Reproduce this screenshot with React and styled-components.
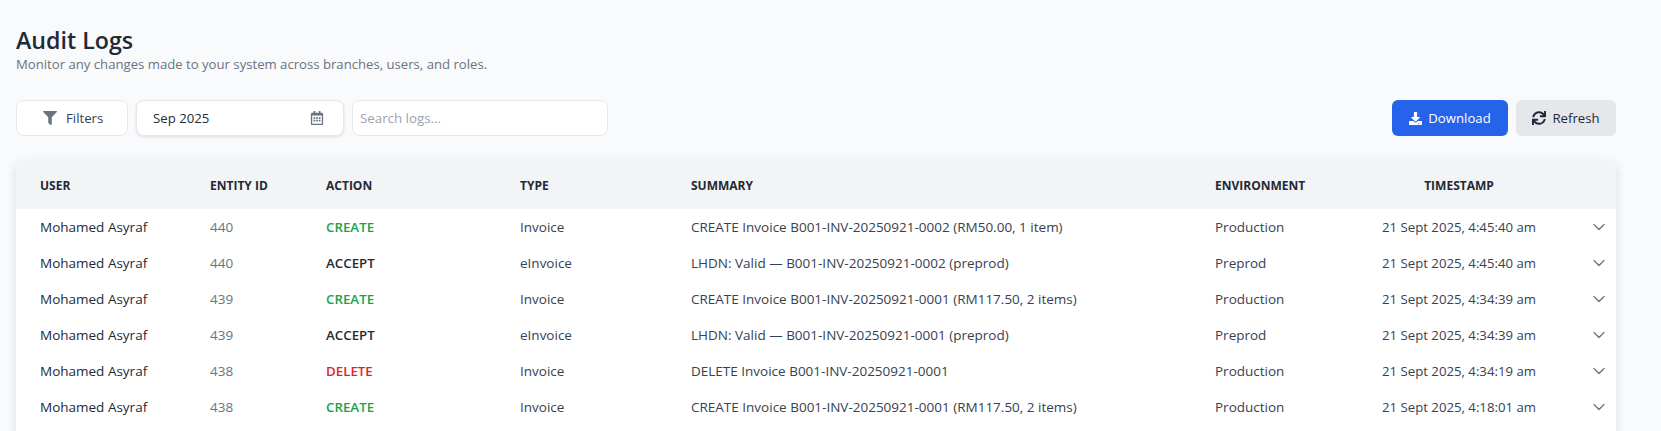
import React from "react";
import styled, { createGlobalStyle } from "styled-components";
import { FaFilter, FaDownload, FaSync, FaRegCalendarAlt } from "react-icons/fa";
import { ChevronDown } from "lucide-react";

const logs = [
  { id: 440, action: "CREATE", type: "Invoice", summary: "CREATE Invoice B001-INV-20250921-0002 (RM50.00, 1 item)", env: "Production", time: "21 Sept 2025, 4:45:40 am" },
  { id: 440, action: "ACCEPT", type: "eInvoice", summary: "LHDN: Valid — B001-INV-20250921-0002 (preprod)", env: "Preprod", time: "21 Sept 2025, 4:45:40 am" },
  { id: 439, action: "CREATE", type: "Invoice", summary: "CREATE Invoice B001-INV-20250921-0001 (RM117.50, 2 items)", env: "Production", time: "21 Sept 2025, 4:34:39 am" },
  { id: 439, action: "ACCEPT", type: "eInvoice", summary: "LHDN: Valid — B001-INV-20250921-0001 (preprod)", env: "Preprod", time: "21 Sept 2025, 4:34:39 am" },
  { id: 438, action: "DELETE", type: "Invoice", summary: "DELETE Invoice B001-INV-20250921-0001", env: "Production", time: "21 Sept 2025, 4:34:19 am" },
  { id: 438, action: "CREATE", type: "Invoice", summary: "CREATE Invoice B001-INV-20250921-0001 (RM117.50, 2 items)", env: "Production", time: "21 Sept 2025, 4:18:01 am" },
];

const actionColors = { CREATE: "#16a34a", ACCEPT: "#1f2937", DELETE: "#dc2626" };

const GlobalStyle = createGlobalStyle`
  html, body {
    margin: 0;
    background: #f9fafb;
    overflow: hidden;
  }
  body {
    font-family: "Open Sans", "Noto Sans", sans-serif;
  }
`;

const Page = styled.div`
  height: 100vh;
  box-sizing: border-box;
  padding: 24px 45px 0 16px;
  display: flex;
  flex-direction: column;
  overflow: hidden;
`;

const Title = styled.h1`
  margin: 0;
  font-size: 23.2px;
  line-height: 32px;
  font-weight: 600;
  color: #1f2937;
`;

const Subtitle = styled.p`
  margin: 0;
  font-size: 13.15px;
  line-height: 16px;
  color: #6b7280;
`;

const Toolbar = styled.div`
  margin-top: 28px;
  display: flex;
  justify-content: space-between;
`;

const ToolGroup = styled.div`
  display: flex;
  gap: 8px;
`;

const FilterButton = styled.button`
  width: 112px;
  height: 36px;
  padding: 0 0 0 26px;
  display: flex;
  align-items: center;
  gap: 9px;
  background: #fff;
  border: 1px solid #e5e7eb;
  border-radius: 8px;
  font: inherit;
  font-size: 13.2px;
  color: #374151;
  svg { color: #6b7280; }
`;

const DateField = styled.div`
  width: 208px;
  height: 36px;
  box-sizing: border-box;
  padding: 0 19px 0 16px;
  display: flex;
  align-items: center;
  justify-content: space-between;
  background: #fff;
  border: 1px solid #e5e7eb;
  border-radius: 8px;
  box-shadow: 0 1px 3px rgba(0, 0, 0, 0.12);
  font-size: 13.2px;
  color: #1f2937;
  svg { color: #6b7280; }
`;

const SearchInput = styled.input`
  width: 256px;
  height: 36px;
  box-sizing: border-box;
  padding: 0 7px;
  background: #fff;
  border: 1px solid #e5e7eb;
  border-radius: 8px;
  font: inherit;
  font-size: 13.3px;
  &::placeholder { color: #9ca3af; }
`;

const ActionButton = styled.button`
  height: 36px;
  width: ${(p) => p.$width}px;
  padding: 0;
  display: flex;
  align-items: center;
  justify-content: center;
  gap: 6px;
  border: none;
  border-radius: 6px;
  font: inherit;
  font-size: 13.2px;
  background: ${(p) => (p.$primary ? "#2563eb" : "#e5e7eb")};
  color: ${(p) => (p.$primary ? "#fff" : "#1f2937")};
`;

const Card = styled.div`
  margin-top: 24px;
  flex: 1;
  background: #fff;
  border-radius: 8px 8px 0 0;
  box-shadow: 0 4px 12px rgba(0, 0, 0, 0.12);
  overflow: hidden;
`;

const Table = styled.table`
  width: 100%;
  table-layout: fixed;
  border-collapse: collapse;
`;

const HeadRow = styled.tr`
  height: 49px;
  background: #f3f4f6;
`;

const HeadCell = styled.th`
  padding: 2px 0 0 ${(p) => (p.$center ? 0 : 24)}px;
  text-align: ${(p) => (p.$center ? "center" : "left")};
  font-size: 12px;
  font-weight: 700;
  color: #1f2937;
`;

const Row = styled.tr`
  height: 36px;
`;

const Cell = styled.td`
  padding: 0 0 0 24px;
  font-size: 13.5px;
  color: #374151;
  white-space: nowrap;
`;

const UserCell = styled(Cell)`
  color: #1f2937;
`;

const IdCell = styled(Cell)`
  color: #6b7280;
`;

const ActionCell = styled(Cell)`
  font-size: 13.3px;
  font-weight: 600;
  color: ${(p) => p.$color};
`;

const TimeCell = styled(Cell)`
  padding: 0;
  text-align: center;
  font-size: 13.2px;
`;

const ChevronCell = styled.td`
  padding: 0;
  color: #6b7280;
  svg { display: block; margin-left: 22px; }
`;

const App = () => (
  <>
    <GlobalStyle />
    <Page>
      <Title>Audit Logs</Title>
      <Subtitle>Monitor any changes made to your system across branches, users, and roles.</Subtitle>
      <Toolbar>
        <ToolGroup>
          <FilterButton><FaFilter size={14} />Filters</FilterButton>
          <DateField>Sep 2025<FaRegCalendarAlt size={14} /></DateField>
          <SearchInput placeholder="Search logs..." />
        </ToolGroup>
        <ToolGroup>
          <ActionButton $primary $width={116}><FaDownload size={13} />Download</ActionButton>
          <ActionButton $width={100}><FaSync size={14} />Refresh</ActionButton>
        </ToolGroup>
      </Toolbar>
      <Card>
        <Table>
          <colgroup>
            <col style={{ width: 170 }} />
            <col style={{ width: 116 }} />
            <col style={{ width: 194 }} />
            <col style={{ width: 171 }} />
            <col style={{ width: 524 }} />
            <col style={{ width: 160 }} />
            <col style={{ width: 216 }} />
            <col />
          </colgroup>
          <thead>
            <HeadRow>
              <HeadCell>USER</HeadCell>
              <HeadCell>ENTITY ID</HeadCell>
              <HeadCell>ACTION</HeadCell>
              <HeadCell>TYPE</HeadCell>
              <HeadCell>SUMMARY</HeadCell>
              <HeadCell>ENVIRONMENT</HeadCell>
              <HeadCell $center>TIMESTAMP</HeadCell>
              <HeadCell />
            </HeadRow>
          </thead>
          <tbody>
            {logs.map((log, i) => (
              <Row key={i}>
                <UserCell>Mohamed Asyraf</UserCell>
                <IdCell>{log.id}</IdCell>
                <ActionCell $color={actionColors[log.action]}>{log.action}</ActionCell>
                <Cell>{log.type}</Cell>
                <Cell>{log.summary}</Cell>
                <Cell>{log.env}</Cell>
                <TimeCell>{log.time}</TimeCell>
                <ChevronCell><ChevronDown size={20} strokeWidth={1.5} /></ChevronCell>
              </Row>
            ))}
          </tbody>
        </Table>
      </Card>
    </Page>
  </>
);

export default App;
